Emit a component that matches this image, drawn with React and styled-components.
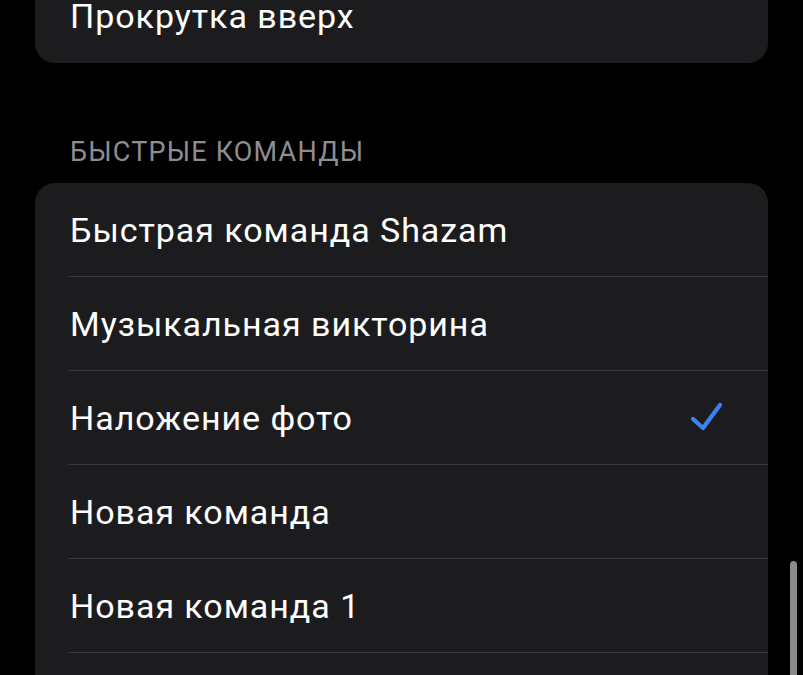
import React from "react";
import styled, { createGlobalStyle } from "styled-components";

const Global = createGlobalStyle`
  html, body { margin: 0; padding: 0; background: #000; }
  body { font-family: Roboto, "Noto Sans", sans-serif; -webkit-font-smoothing: antialiased; }
  #root { height: 675px; overflow: hidden; }
`;

const Screen = styled.div`
  position: relative;
  height: 675px;
  overflow: hidden;
  background: #000;
  padding: 0 35px;
  box-sizing: border-box;
`;

const Card = styled.div`
  background: #1c1c1e;
  border-radius: ${(p) => (p.$cutTop ? "0 0 20px 20px" : "20px")};
  margin-top: ${(p) => p.$offset || 0}px;
  overflow: hidden;
`;

const Row = styled.div`
  height: 94px;
  display: flex;
  align-items: center;
  justify-content: space-between;
  padding: 0 44px 0 35px;
  position: relative;
  box-sizing: border-box;
  &:not(:last-child)::after {
    content: "";
    position: absolute;
    left: 33px;
    right: 0;
    bottom: 0;
    height: 1px;
    background: #38383a;
  }
`;

const Label = styled.span`
  color: #fff;
  font-size: 34px;
  letter-spacing: 0.95px;
  white-space: nowrap;
`;

const SectionHeader = styled.div`
  color: #8d8d93;
  font-size: 27px;
  letter-spacing: 1.2px;
  padding: 73px 0 0 35px;
  height: 120px;
  box-sizing: border-box;
  text-transform: uppercase;
`;

const Scrollbar = styled.div`
  position: absolute;
  right: 6px;
  top: 561px;
  width: 7px;
  height: 140px;
  border-radius: 4px;
  background: #8a8a8c;
`;

const Check = () => (
  <svg width="34" height="32" viewBox="0 0 34 32" fill="none">
    <path
      d="M3 17 L13 26 L30 3"
      stroke="#3b82f6"
      strokeWidth="4.2"
      strokeLinecap="round"
      strokeLinejoin="round"
    />
  </svg>
);

const items = [
  { label: "Быстрая команда Shazam" },
  { label: "Музыкальная викторина" },
  { label: "Наложение фото", checked: true },
  { label: "Новая команда" },
  { label: "Новая команда 1" },
  { label: "" },
];

export default function App() {
  return (
    <>
      <Global />
      <Screen>
        <Card $cutTop $offset={-31}>
          <Row>
            <Label>Прокрутка вверх</Label>
          </Row>
        </Card>
        <SectionHeader>Быстрые команды</SectionHeader>
        <Card>
          {items.map((it, i) => (
            <Row key={i}>
              <Label>{it.label}</Label>
              {it.checked && <Check />}
            </Row>
          ))}
        </Card>
        <Scrollbar />
      </Screen>
    </>
  );
}
